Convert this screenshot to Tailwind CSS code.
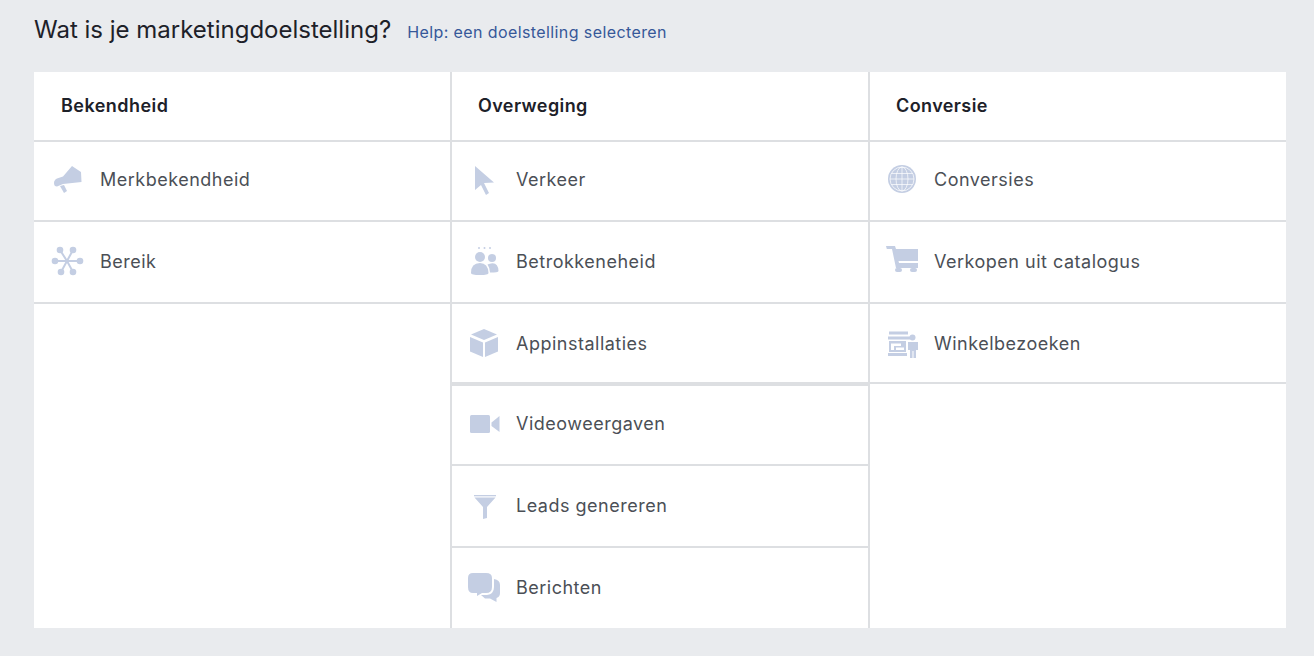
<!DOCTYPE html>
<html lang="nl"><head><meta charset="utf-8"><script src="https://cdn.jsdelivr.net/npm/@tailwindcss/browser@4"></script></head>
<body class="bg-[#e9ebee] h-[656px] overflow-hidden font-['Inter','Roboto',sans-serif] antialiased">
<div class="pl-[34px] pr-[28px]">
<div class="h-[72px] pb-[12px] flex items-center">
<h1 class="text-[24px] leading-[30px] text-[#1d2129] font-normal">Wat is je marketingdoelstelling?</h1>
<a class="ml-[16px] mt-[4px] text-[16px] leading-[20px] text-[#365899] tracking-[0.4px]">Help: een doelstelling selecteren</a>
</div>
<div class="bg-white h-[556px] grid grid-cols-[418px_418px_416px]">

<div class="border-r-2 border-[#dddfe2]">
<div class="h-[70px] pb-[2px] border-b-2 border-[#dddfe2] pl-[27px] flex items-center text-[18px] font-semibold text-[#1d2129] tracking-[0.45px]">Bekendheid</div>
<div class="h-[80px] pb-[4px] border-b-2 border-[#dddfe2] flex items-center text-[18px] text-[#4b4f56] tracking-[0.5px]">
<div class="w-[66px] pl-[16px] shrink-0"><svg class="block" width="34" height="34" viewBox="0 0 34 34" fill="#c4cee3"><path d="M22 4 L31 10 L31.500 20 L13 22 L7 24.500 Q4 24.500 4 21 Q4 18 7 16.500 L13 14.500 Z"/><path d="M10 24 L14 23 L17 29 L14 31 Z"/></svg></div>Merkbekendheid</div>
<div class="h-[82px] pb-[2px] border-b-2 border-[#dddfe2] flex items-center text-[18px] text-[#4b4f56] tracking-[0.5px]">
<div class="w-[66px] pl-[16px] shrink-0"><svg class="block" width="34" height="34" viewBox="0 0 34 34" fill="#c4cee3" stroke="#c4cee3"><path fill="none" stroke-width="2" d="M17 17 L10 6 M17 17 L23 6 M17 17 L5 17 M17 17 L30 17 M17 17 L11 28 M17 17 L23 28"/><g stroke="none"><circle cx="10" cy="6" r="3.300"/><circle cx="23" cy="6" r="3.300"/><circle cx="5" cy="17" r="3.300"/><circle cx="30" cy="17" r="3.300"/><circle cx="11" cy="28" r="3.300"/><circle cx="23" cy="28" r="3.300"/></g></svg></div>Bereik</div>
</div>

<div class="border-r-2 border-[#dddfe2]">
<div class="h-[70px] pb-[2px] border-b-2 border-[#dddfe2] pl-[26px] flex items-center text-[18px] font-semibold text-[#1d2129] tracking-[0.4px]">Overweging</div>
<div class="h-[80px] pb-[4px] border-b-2 border-[#dddfe2] flex items-center text-[18px] text-[#4b4f56] tracking-[0.5px]">
<div class="w-[64px] pl-[16px] shrink-0"><svg class="block" width="34" height="34" viewBox="0 0 34 34" fill="#c4cee3"><path d="M7 4 L26 20.500 L16 21 L21 31 L18 33 L13 23 L7 28 Z"/></svg></div>Verkeer</div>
<div class="h-[82px] pb-[2px] border-b-2 border-[#dddfe2] flex items-center text-[18px] text-[#4b4f56] tracking-[0.5px]">
<div class="w-[64px] pl-[16px] shrink-0"><svg class="block" width="34" height="34" viewBox="0 0 34 34" fill="#c4cee3"><circle cx="11" cy="4" r="1"/><circle cx="16.500" cy="4" r="1"/><circle cx="22" cy="4" r="1"/><circle cx="12" cy="13" r="5"/><circle cx="24" cy="14" r="4"/><path d="M3 29 Q3 19 12 19 Q20 19 20.500 29 Q20.500 31 12 31 Q3 31 3 29 Z"/><path d="M21 20 Q30 17 30.500 27 Q30.500 28.500 22 28.500 Q22 24 19.500 20.500 Z"/></svg></div>Betrokkeneheid</div>
<div class="h-[82px] border-b-4 border-[#dddfe2] flex items-center text-[18px] text-[#4b4f56] tracking-[0.5px]">
<div class="w-[64px] pl-[15px] shrink-0"><svg class="block" width="34" height="34" viewBox="0 0 34 34" fill="#c4cee3"><path d="M17 3 L30 8.500 L17 14 L4 8.500 Z"/><path d="M3 11 L16 16.500 L16 31 L3 25.500 Z"/><path d="M31 11 L18 16.500 L18 31 L31 25.500 Z"/></svg></div>Appinstallaties</div>
<div class="h-[80px] pb-[4px] border-b-2 border-[#dddfe2] flex items-center text-[18px] text-[#4b4f56] tracking-[0.5px]">
<div class="w-[64px] pl-[16px] shrink-0"><svg class="block" width="34" height="34" viewBox="0 0 34 34" fill="#c4cee3"><rect x="2" y="9" width="20" height="18" rx="1.500"/><path d="M31.500 10 L31.500 26 L23.500 20 L23.500 16.500 Z"/></svg></div>Videoweergaven</div>
<div class="h-[82px] pb-[2px] border-b-2 border-[#dddfe2] flex items-center text-[18px] text-[#4b4f56] tracking-[0.5px]">
<div class="w-[64px] pl-[16px] shrink-0"><svg class="block" width="34" height="34" viewBox="0 0 34 34" fill="#c4cee3"><rect x="6" y="7" width="22" height="1.300"/><path d="M6.500 9.500 L27.500 9.500 L19 19 L19 30 L15 31 L15 19 Z"/></svg></div>Leads genereren</div>
<div class="h-[80px] pb-[2px] flex items-center text-[18px] text-[#4b4f56] tracking-[0.5px]">
<div class="w-[64px] pl-[16px] shrink-0"><svg class="block" width="34" height="34" viewBox="0 0 34 34" fill="#c4cee3"><path d="M5 3 L18 3 Q24 3 24 8 L24 17 Q24 23 18 23 L14 23 L9 26 L9 23 L5 23 Q0 23 0 17 L0 8 Q0 3 5 3 Z"/><path d="M26 9 Q32 10 32 15 L32 23 Q32 27 28.500 28 L28.500 32 L22 28.500 L17 28.500 L13 25 L19 25 Q26 24 26 17 Z"/></svg></div>Berichten</div>
</div>

<div>
<div class="h-[70px] pb-[2px] border-b-2 border-[#dddfe2] pl-[26px] flex items-center text-[18px] font-semibold text-[#1d2129] tracking-[0.4px]">Conversie</div>
<div class="h-[80px] pb-[4px] border-b-2 border-[#dddfe2] flex items-center text-[18px] text-[#4b4f56] tracking-[0.5px]">
<div class="w-[64px] pl-[16px] shrink-0"><svg class="block" width="32" height="32" viewBox="0 0 32 32" fill="#c4cee3"><circle cx="16" cy="16" r="14"/><g fill="none" stroke="#fff" stroke-width="0.700"><circle cx="16" cy="16" r="12"/><ellipse cx="16" cy="16" rx="6" ry="12"/><path d="M16 4 V28 M4 16 H28 M5.500 10.500 H26.500 M5.500 21.500 H26.500"/></g></svg></div>Conversies</div>
<div class="h-[82px] pb-[2px] border-b-2 border-[#dddfe2] flex items-center text-[18px] text-[#4b4f56] tracking-[0.5px]">
<div class="w-[64px] pl-[16px] shrink-0"><svg class="block" width="34" height="34" viewBox="0 0 34 34" fill="#c4cee3"><path d="M0 2 L9 2 L10 5 L32 5 L32 17 L12.500 17 L13 19 L32 19 L32 24 L10 24 L6 5 L0.800 5 Z"/><rect x="9" y="24" width="7" height="4" rx="2"/><rect x="24" y="24" width="7" height="4" rx="2"/></svg></div>Verkopen uit catalogus</div>
<div class="h-[80px] border-b-2 border-[#dddfe2] flex items-center text-[18px] text-[#4b4f56] tracking-[0.5px]">
<div class="w-[64px] pl-[16px] shrink-0"><svg class="block" width="34" height="34" viewBox="0 0 34 34" fill="#c4cee3"><rect x="3" y="5.500" width="19" height="3"/><rect x="2" y="10.500" width="22" height="3"/><path d="M3 15 H20 V26 H3 Z M5 17.500 V24 H8 V20 H15 V17.500 Z M10 21.500 V24 H18 V21.500 Z" fill-rule="evenodd"/><rect x="2" y="27" width="19" height="3"/><circle cx="26.500" cy="11.500" r="3"/><path d="M22 16 H32 V24 H30 V32 H27.500 V25 H26.500 V32 H24 V24 H22 Z"/></svg></div>Winkelbezoeken</div>
</div>

</div></div>
</body></html>
